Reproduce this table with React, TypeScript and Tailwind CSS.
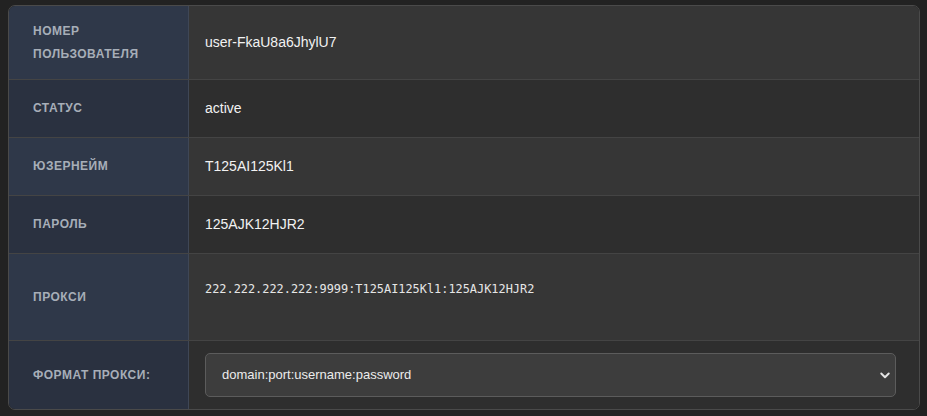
import React from "react";

type Row = {
  label: React.ReactNode;
  h: string;
  odd: boolean;
  value: React.ReactNode;
  valueClass?: string;
};

export default function App() {
  const rows: Row[] = [
    {
      label: (
        <>
          НОМЕР
          <br />
          ПОЛЬЗОВАТЕЛЯ
        </>
      ),
      h: "h-[74px]",
      odd: true,
      value: <span>user-FkaU8a6JhylU7</span>,
    },
    { label: "СТАТУС", h: "h-[58px]", odd: false, value: <span>active</span> },
    { label: "ЮЗЕРНЕЙМ", h: "h-[58px]", odd: true, value: <span>T125AI125Kl1</span> },
    { label: "ПАРОЛЬ", h: "h-[58px]", odd: false, value: <span>125AJK12HJR2</span> },
    {
      label: "ПРОКСИ",
      h: "h-[87px]",
      odd: true,
      valueClass: "items-start pt-[27px]",
      value: (
        <code className="text-[11.9px] leading-[16px] text-[#e6e6e6] [font-family:'DejaVu_Sans_Mono',monospace]">
          222.222.222.222:9999:T125AI125Kl1:125AJK12HJR2
        </code>
      ),
    },
    {
      label: "ФОРМАТ ПРОКСИ:",
      h: "h-[68px]",
      odd: false,
      valueClass: "pr-[23px]",
      value: (
        <div className="relative w-full">
          <select
            defaultValue="a"
            className="block h-[44px] w-full appearance-none rounded-[5px] border border-[#5c5c5c] bg-[#3d3d3d] pl-4 pr-10 text-[13px] text-[#ececec] outline-none [font-family:'Liberation_Sans',Arial,sans-serif]"
          >
            <option value="a">domain:port:username:password</option>
          </select>
          <svg
            className="pointer-events-none absolute right-[5px] top-1/2 -translate-y-1/2"
            width="12"
            height="12"
            viewBox="0 0 16 16"
            fill="none"
          >
            <path
              d="M3 6l5 5 5-5"
              stroke="#e4e4e4"
              strokeWidth="2.6"
              strokeLinecap="round"
              strokeLinejoin="round"
            />
          </svg>
        </div>
      ),
    },
  ];

  return (
    <div className="min-h-[416px] w-full bg-[#222222] pt-[5px] pl-2 [font-family:'Liberation_Sans',Arial,sans-serif]">
      <div className="w-[912px] overflow-hidden rounded-[7px] border border-[#4a4a4a]">
        {rows.map((r, i) => (
          <div
            key={i}
            className={`flex ${r.h} ${i < rows.length - 1 ? "border-b border-[#444444]" : ""}`}
          >
            <div
              className={`flex w-[180px] shrink-0 items-center border-r border-[#3f4756] pl-6 text-[12px] font-bold uppercase leading-[23px] tracking-[0.5px] text-[#a7aeb8] ${
                r.odd ? "bg-[#2f3849]" : "bg-[#2a3140]"
              }`}
            >
              <div>{r.label}</div>
            </div>
            <div
              className={`flex flex-1 pl-4 text-[14px] text-[#f2f2f2] ${
                r.valueClass && r.valueClass.includes("items-start") ? "" : "items-center"
              } ${r.valueClass ?? ""} ${r.odd ? "bg-[#363636]" : "bg-[#2e2e2e]"}`}
            >
              {r.value}
            </div>
          </div>
        ))}
      </div>
    </div>
  );
}
